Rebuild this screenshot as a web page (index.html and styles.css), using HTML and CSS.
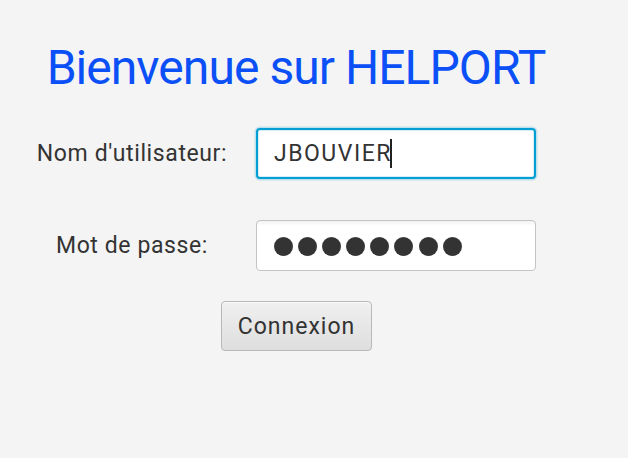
FILE: index.html
```html
<!DOCTYPE html>
<html lang="fr">
<head>
<meta charset="utf-8">
<title>HELPORT</title>
<link rel="stylesheet" href="styles.css">
</head>
<body>
<main class="pane">
  <h1 class="title">Bienvenue sur HELPORT</h1>
  <div class="form">
    <label class="label">Nom d'utilisateur:</label>
    <div class="field focused"><span class="value">JBOUVIER</span><span class="caret"></span></div>
    <label class="label">Mot de passe:</label>
    <div class="field"><span class="dots" aria-label="mot de passe masqué"><i></i><i></i><i></i><i></i><i></i><i></i><i></i><i></i></span></div>
  </div>
  <div class="actions">
    <button class="btn" type="button">Connexion</button>
  </div>
</main>
</body>
</html>
```
FILE: styles.css
```css
html, body {
  margin: 0;
  padding: 0;
  background: #f4f4f4;
}
body {
  font-family: Roboto, "Liberation Sans", sans-serif;
  color: #333333;
  width: 628px;
  height: 458px;
  overflow: hidden;
}
.pane {
  margin-left: 8px;
  width: 576px;
  padding-top: 44px;
}
.title {
  margin: 0;
  font-weight: 400;
  font-size: 48px;
  line-height: 48px;
  letter-spacing: -0.95px;
  color: #0b4ff6;
  text-align: center;
}
.form {
  margin-top: 36px;
  display: grid;
  grid-template-columns: 248px 280px;
  grid-auto-rows: 51px;
  row-gap: 41px;
  align-items: center;
}
.label {
  font-size: 23px;
  letter-spacing: 0.6px;
  text-align: center;
  color: #333;
}
.field {
  box-sizing: border-box;
  height: 51px;
  border: 1px solid #c4c4c4;
  border-radius: 4px;
  background: linear-gradient(#f2f2f2 0, #ffffff 5px);
  display: flex;
  align-items: center;
  padding-left: 17px;
  font-size: 23px;
  color: #333;
}
.field .value {
  letter-spacing: 1.5px;
  margin-right: -1.5px;
}
.field.focused {
  border: 2px solid #039ed3;
  box-shadow: 0 0 0 1.5px rgba(3, 158, 211, 0.22), inset 0 0 0 1px #d6eef7;
  background: #fff;
  padding-left: 16px;
}
.caret {
  width: 2px;
  height: 29px;
  background: #222;
}
.dots {
  display: flex;
  gap: 5.1px;
  padding-top: 1px;
}
.dots i {
  width: 19px;
  height: 19px;
  border-radius: 50%;
  background: #333;
}
.actions {
  display: flex;
  justify-content: center;
  margin-top: 30px;
}
.btn {
  box-sizing: border-box;
  width: 151px;
  height: 50px;
  font-family: inherit;
  font-size: 23px;
  letter-spacing: 1px;
  color: #333;
  border: 1px solid #b8b8b8;
  border-radius: 4px;
  background: linear-gradient(#f0f0f0, #dedede);
  box-shadow: inset 0 1px 0 #fafafa;
  padding: 0 0 0 1px;
}
```
